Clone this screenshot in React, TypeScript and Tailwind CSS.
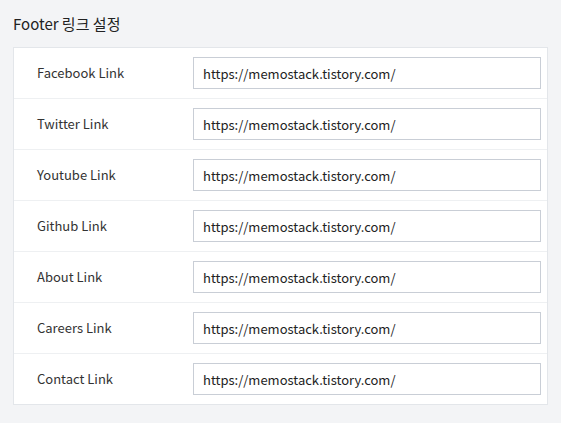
import React from "react";

const rows = [
  "Facebook Link",
  "Twitter Link",
  "Youtube Link",
  "Github Link",
  "About Link",
  "Careers Link",
  "Contact Link",
];

export default function App() {
  return (
    <div
      className="w-[561px] h-[423px] bg-[#f3f4f6] px-[13px] pt-[13px]"
      style={{ fontFamily: '"Noto Sans CJK KR", "Noto Sans", sans-serif' }}
    >
      <h2 className="text-[15px] leading-[22px] text-[#222] font-normal">Footer 링크 설정</h2>
      <div className="mt-[12px] w-[535px] bg-white border border-[#e3e6ea]">
        {rows.map((label, i) => (
          <div
            key={label}
            className={`flex items-center box-content h-[50px] pr-[6px] ${i > 0 ? "border-t border-[#eef0f2]" : ""}`}
          >
            <div className="w-[179px] pl-[23px] text-[13px] text-[#333]">{label}</div>
            <input
              readOnly
              value="https://memostack.tistory.com/"
              className="flex-1 h-[32px] border border-[#c9ced6] px-[9px] text-[13px] text-[#222] outline-none"
            />
          </div>
        ))}
      </div>
    </div>
  );
}
